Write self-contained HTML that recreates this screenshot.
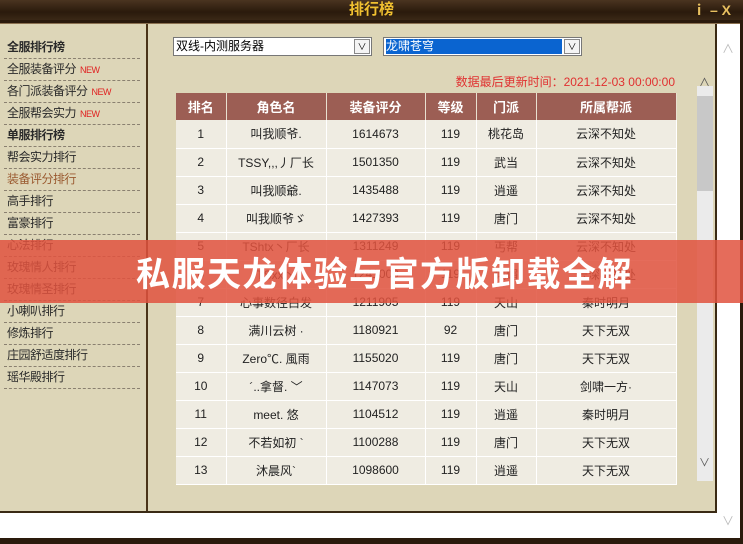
<!DOCTYPE html><html><head><meta charset="utf-8"><style>
*{margin:0;padding:0;box-sizing:border-box}
body{width:743px;height:544px;overflow:hidden;background:#fff;font-family:"Liberation Sans","Noto Sans CJK SC",sans-serif;position:relative}
.abs{position:absolute}
#title{left:0;top:0;width:743px;height:20px;background:linear-gradient(#4a3420,#2a1a0c 60%,#3a2816);}
#title span{position:absolute;left:0;width:743px;text-align:center;top:0;color:#f0c030;font-size:15px;font-weight:bold;line-height:20px}
#line{left:0;top:20px;width:743px;height:4px;background:#2a1a0c;border-bottom:1px solid #8a7050}
#panel{left:0;top:24px;width:717px;height:489px;background:#ddd6b8;border-right:2px solid #3a2a14;border-bottom:2px solid #3a2a14}
#side{left:0;top:24px;width:148px;height:487px;border-right:2px solid #4a3418;background:#ddd6b8}
.it{position:absolute;left:4px;width:136px;height:22px;border-bottom:1px dashed #8a8070;font-size:12px;line-height:21px;color:#2a2a2a;padding-left:3px;letter-spacing:-0.5px}
.it b{font-weight:bold}
.new{color:#e02020;font-size:9px;margin-left:4px}
.sel{height:19px;background:#fff;border:1px solid #777;font-size:12px;line-height:17px;padding-left:2px}
.sel i{position:absolute;right:1px;top:1px;width:16px;height:15px;border:1px solid #888;background:#f4f4f4;font-style:normal;font-size:9px;text-align:center;line-height:14px}
table{position:absolute;left:176px;top:93px;border-collapse:collapse;font-size:12px;color:#222;table-layout:fixed;width:500px}
th{background:#9c5e54;color:#fff;height:27px;font-size:13px;border-right:1px solid #e8e0d0}
td{background:#efece2;height:28px;text-align:center;border-right:1px solid #fff;border-bottom:1px solid #fff;white-space:nowrap;overflow:hidden}
#banner{left:0;top:240px;width:743px;height:63px;background:rgba(224,82,62,0.85);color:#fff;font-size:34px;font-weight:bold;line-height:63px;padding-left:136px;font-family:"Noto Sans CJK SC",sans-serif;letter-spacing:1.5px}
</style></head><body>
<div id="panel" class="abs"></div>
<div id="side" class="abs"></div>
<div id="title" class="abs"><span>排行榜</span><span style="left:auto;right:12px;width:auto;color:#e8c060;font-size:14px">ⅰ – X</span></div>
<div id="line" class="abs"></div>
<div class="it" style="top:37px"><b>全服排行榜</b></div>
<div class="it" style="top:59px">全服装备评分<span class="new">NEW</span></div>
<div class="it" style="top:81px">各门派装备评分<span class="new">NEW</span></div>
<div class="it" style="top:103px">全服帮会实力<span class="new">NEW</span></div>
<div class="it" style="top:125px"><b>单服排行榜</b></div>
<div class="it" style="top:147px">帮会实力排行</div>
<div class="it" style="top:169px;color:#9a5a30">装备评分排行</div>
<div class="it" style="top:191px">高手排行</div>
<div class="it" style="top:213px">富豪排行</div>
<div class="it" style="top:235px">心法排行</div>
<div class="it" style="top:257px">玫瑰情人排行</div>
<div class="it" style="top:279px">玫瑰情圣排行</div>
<div class="it" style="top:301px">小喇叭排行</div>
<div class="it" style="top:323px">修炼排行</div>
<div class="it" style="top:345px">庄园舒适度排行</div>
<div class="it" style="top:367px">瑶华殿排行</div>
<div class="abs sel" style="left:173px;top:37px;width:199px">双线-内测服务器<i>∨</i></div>
<div class="abs sel" style="left:383px;top:37px;width:199px"><span style="background:#0a64d0;color:#fff;display:inline-block;width:176px;line-height:15px">龙啸苍穹</span><i>∨</i></div>
<div class="abs" style="left:400px;top:73px;width:275px;text-align:right;color:#e03030;font-size:12px">数据最后更新时间：2021-12-03 00:00:00</div>
<div class="abs" style="left:697px;top:86px;width:16px;height:395px;background:#ebebeb"></div>
<div class="abs" style="left:697px;top:96px;width:16px;height:95px;background:#c8c8c8"></div>
<div class="abs" style="left:699px;top:74px;color:#555;font-size:11px">∧</div>
<div class="abs" style="left:699px;top:454px;color:#555;font-size:11px">∨</div>
<div class="abs" style="left:722px;top:40px;color:#bbb;font-size:12px">∧</div>
<div class="abs" style="left:722px;top:512px;color:#bbb;font-size:12px">∨</div>
<table>
<colgroup><col style="width:50px"><col style="width:100px"><col style="width:99px"><col style="width:51px"><col style="width:60px"><col style="width:140px"></colgroup>
<tr><th>排名</th><th>角色名</th><th>装备评分</th><th>等级</th><th>门派</th><th>所属帮派</th></tr>
<tr><td>1</td><td>叫我顺爷.</td><td>1614673</td><td>119</td><td>桃花岛</td><td>云深不知处</td></tr>
<tr><td>2</td><td>TSSY,,,丿厂长</td><td>1501350</td><td>119</td><td>武当</td><td>云深不知处</td></tr>
<tr><td>3</td><td>叫我顺爺.</td><td>1435488</td><td>119</td><td>逍遥</td><td>云深不知处</td></tr>
<tr><td>4</td><td>叫我顺爷ゞ</td><td>1427393</td><td>119</td><td>唐门</td><td>云深不知处</td></tr>
<tr><td>5</td><td>TShtx丶厂长</td><td>1311249</td><td>119</td><td>丐帮</td><td>云深不知处</td></tr>
<tr><td>6</td><td>TSxx丶</td><td>1241000</td><td>119</td><td>峨嵋</td><td>云深不知处</td></tr>
<tr><td>7</td><td>心事数径白发</td><td>1211905</td><td>119</td><td>天山</td><td>秦时明月</td></tr>
<tr><td>8</td><td>满川云树 ·</td><td>1180921</td><td>92</td><td>唐门</td><td>天下无双</td></tr>
<tr><td>9</td><td>Zero℃. 風雨</td><td>1155020</td><td>119</td><td>唐门</td><td>天下无双</td></tr>
<tr><td>10</td><td>´..拿督. ﹀</td><td>1147073</td><td>119</td><td>天山</td><td>剑啸一方·</td></tr>
<tr><td>11</td><td>meet. 悠</td><td>1104512</td><td>119</td><td>逍遥</td><td>秦时明月</td></tr>
<tr><td>12</td><td>不若如初 `</td><td>1100288</td><td>119</td><td>唐门</td><td>天下无双</td></tr>
<tr><td>13</td><td>沐晨风`</td><td>1098600</td><td>119</td><td>逍遥</td><td>天下无双</td></tr>
</table>
<div class="abs" style="left:740px;top:20px;width:3px;height:524px;background:#2a1a0c"></div>
<div class="abs" style="left:0;top:538px;width:743px;height:6px;background:#2a1a0c"></div>
<div id="banner" class="abs">私服天龙体验与官方版卸载全解</div>
</body></html>
